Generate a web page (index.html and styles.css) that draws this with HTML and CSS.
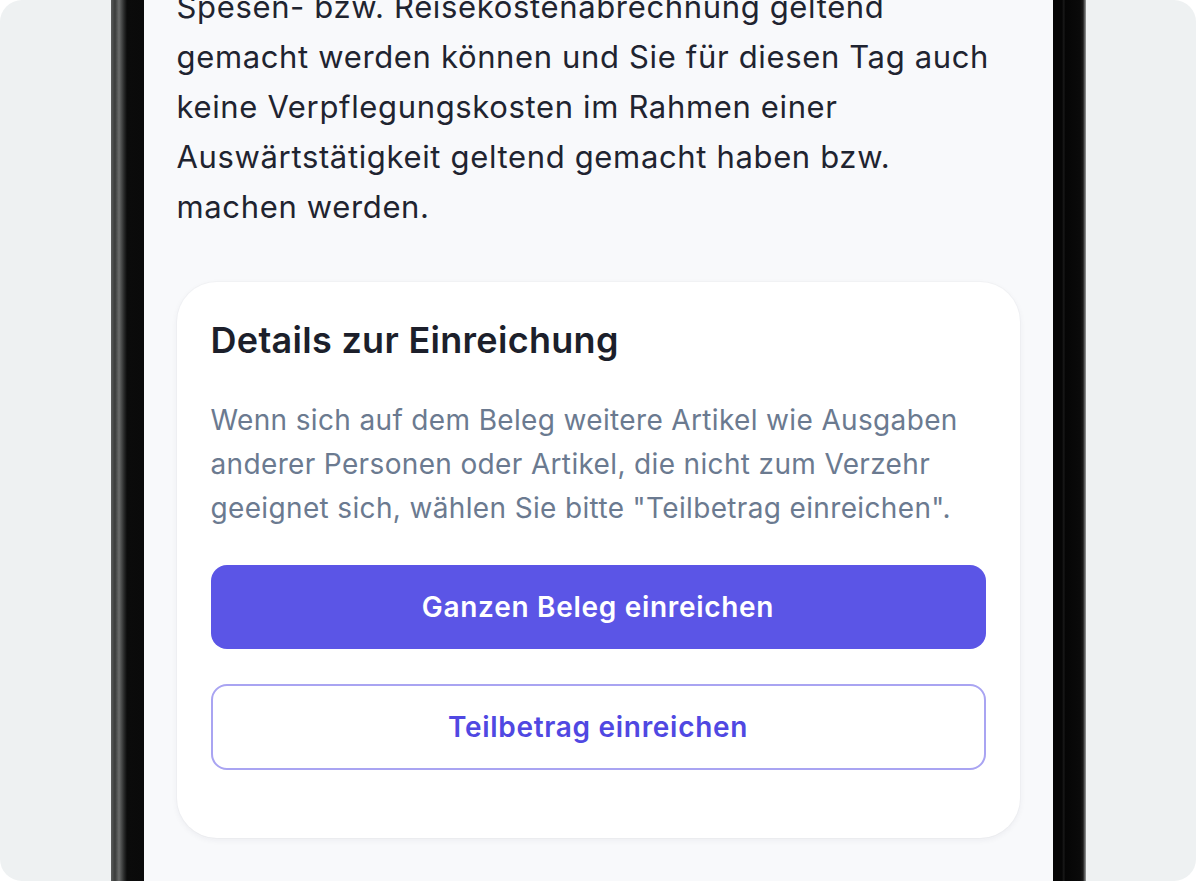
FILE: index.html
```html
<!DOCTYPE html>
<html lang="de">
<head>
<meta charset="utf-8">
<title>Details zur Einreichung</title>
<link rel="stylesheet" href="styles.css">
</head>
<body>
<div class="stage">
  <div class="phone">
    <div class="screen">
      <p class="intro">Spesen- bzw. Reisekostenabrechnung geltend gemacht werden können und Sie für diesen Tag auch keine Verpflegungskosten im Rahmen einer Auswärtstätigkeit geltend gemacht haben bzw. machen werden.</p>
      <section class="card">
        <h2 class="card-title">Details zur Einreichung</h2>
        <p class="card-text">Wenn sich auf dem Beleg weitere Artikel wie Ausgaben anderer Personen oder Artikel, die nicht zum Verzehr geeignet sich, wählen Sie bitte "Teilbetrag einreichen".</p>
        <button class="btn btn-primary">Ganzen Beleg einreichen</button>
        <button class="btn btn-outline">Teilbetrag einreichen</button>
      </section>
    </div>
  </div>
</div>
</body>
</html>
```

FILE: styles.css
```css
* { box-sizing: border-box; }
html, body { margin: 0; padding: 0; background: #ffffff; }
body { width: 1196px; height: 881px; overflow: hidden; font-family: Inter, "Noto Sans", sans-serif; }

.stage {
  width: 1196px;
  height: 881px;
  border-radius: 22px;
  background: #eef1f2;
  overflow: hidden;
  display: flex;
  justify-content: center;
}

.phone {
  width: 975px;
  height: 100%;
  padding: 0 33px;
  background:
    linear-gradient(90deg, #5a5c5b 0px, #3a3c3b 4px, #6b6d6c 8px, #2a2b2b 13px, #0b0b0b 16px, #0a0a0a 33px, transparent 33px),
    linear-gradient(270deg, #9a9c9c 0px, #1a1a1a 3px, #0a0a0a 6px, #050505 21px, #1b1b1b 22px, #050505 24px, #050505 33px, transparent 33px);
  background-color: #080808;
}

.screen {
  display: flow-root;
  width: 909px;
  height: 100%;
  background: #f8f9fb;
  padding: 0 33px;
}

.intro {
  margin: -18px 0 0;
  font-size: 31px;
  line-height: 50px;
  color: #1f2430;
  letter-spacing: 0.65px;
}

.card {
  margin-top: 50px;
  width: 843px;
  background: #ffffff;
  border-radius: 40px;
  padding: 36px 34px 68px;
  box-shadow: 0 2px 6px rgba(30, 40, 60, 0.06), 0 0 0 1px rgba(30, 40, 60, 0.02);
  display: flex;
  flex-direction: column;
}

.card-title {
  margin: 0;
  font-size: 36px;
  line-height: 44px;
  font-weight: 600;
  color: #1c1f2b;
  letter-spacing: 0.3px;
}

.card-text {
  margin: 36px 0 0;
  font-size: 28px;
  line-height: 44px;
  color: #6b7a90;
  letter-spacing: 0.35px;
}

.btn {
  font-family: inherit;
  font-size: 28px;
  font-weight: 600;
  letter-spacing: 0.7px;
  width: 100%;
  border-radius: 16px;
  cursor: pointer;
}

.btn-primary {
  margin-top: 35px;
  height: 84px;
  background: #5b55e6;
  border: none;
  color: #ffffff;
}

.btn-outline {
  margin-top: 35px;
  height: 86px;
  background: #ffffff;
  border: 2px solid #a9a4f2;
  color: #5048e2;
}
```
